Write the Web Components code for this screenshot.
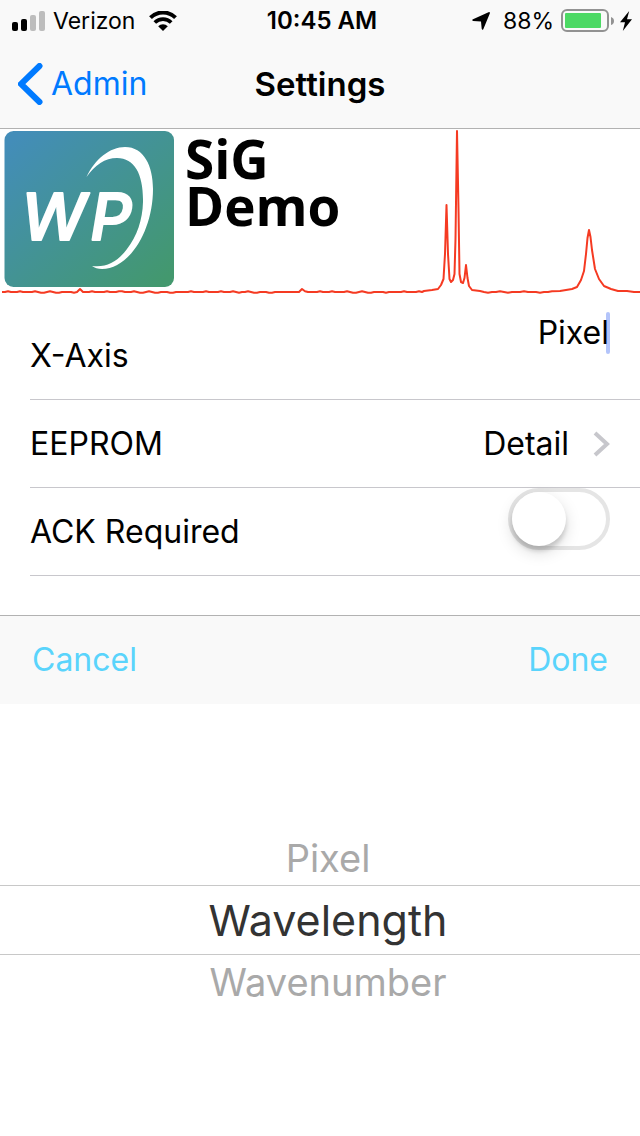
<!DOCTYPE html>
<html lang="en">
<head>
<meta charset="utf-8">
<meta name="viewport" content="width=device-width">
<title>Settings</title>
<style>
body { margin: 0; background: #fff; color: #000; font-family: Inter, "Liberation Sans", sans-serif; }
</style>
</head>
<body>
<settings-screen></settings-screen>
<script>
function define(name, html, setup) {
  const template = document.createElement('template');
  template.innerHTML = html;
  customElements.define(name, class extends HTMLElement {
    constructor() {
      super();
      this.attachShadow({ mode: 'open' }).append(template.content.cloneNode(true));
    }
    connectedCallback() { if (setup) setup(this, this.shadowRoot); }
  });
}

define('status-bar', `
<style>
:host { display: grid; grid-template-columns: 1fr auto 1fr; align-items: center; height: 40px; padding: 0 8px 0 12px; background: #f9f9f9; font-size: 23px; line-height: 42px; }
div { display: flex; align-items: center; }
.right { justify-content: flex-end; }
time { font-size: 24px; font-weight: 600; }
svg { display: block; flex: none; }
.bars { margin-right: 8px; }
.wifi { margin-left: 14px; }
.loc { margin-right: 13px; }
.battery { margin: 0 5px 0 7px; }
</style>
<div><svg class="bars" width="33" height="20" viewBox="0 0 33 20"><rect y="11" width="6" height="9" rx="2"/><rect x="9" y="8" width="6" height="12" rx="2"/><g fill="#bdbdbd"><rect x="18" y="4" width="6" height="16" rx="2"/><rect x="27" width="6" height="20" rx="2"/></g></svg>
<span>Verizon</span>
<svg class="wifi" width="28" height="20" viewBox="0 0 28 20"><path d="M1.500 6.600a17.800 17.800 0 0 1 25 0" fill="none" stroke="#000" stroke-width="4"/><path d="M5.800 11.500a11.600 11.600 0 0 1 16.400 0" fill="none" stroke="#000" stroke-width="3.700"/><path d="M9.200 15.300a6.800 6.800 0 0 1 9.600 0L14 20z"/></svg></div>
<time>10:45 AM</time>
<div class="right"><svg class="loc" width="18" height="18" viewBox="0 0 18 18"><path d="M16.500 .2q1.800-.4 1.300 1.300L11.400 17q-1 1.800-1.700-.2L9 9.600 1.200 8.900Q-.8 8.200 1 7.200z"/></svg>
<span>88%</span>
<svg class="battery" width="54" height="24" viewBox="0 0 54 24"><rect x="1" y="1" width="46" height="21" rx="5" fill="none" stroke="#929292" stroke-width="2"/><rect x="4" y="4" width="36" height="15" rx="1" fill="#4cd964"/><path d="M50 8q3 1 3 4t-3 4z" fill="#929292"/></svg>
<svg width="12" height="20" viewBox="0 0 12 20"><path d="M9.200 0 0 11.200h5L2.800 20 12 8.200H7z"/></svg></div>`);

define('nav-bar', `
<style>
:host { display: grid; grid-template-columns: 1fr auto 1fr; align-items: center; height: 88px; padding: 0 18px; background: #f9f9f9; border-bottom: 1px solid #b2b2b2; line-height: 40px; }
a { display: flex; align-items: center; gap: 8px; color: #007aff; font-size: 32px; text-decoration: none; }
h1 { margin: 0; font-size: 33px; font-weight: 600; }
</style>
<a href="#admin"><svg width="25" height="42" viewBox="0 0 25 42"><path d="M21.500 3 3 21l18.500 18" fill="none" stroke="#007aff" stroke-width="6" stroke-linecap="round"/></svg><slot name="back"></slot></a>
<h1><slot></slot></h1>`);

define('spectrum-banner', `
<style>
:host { display: grid; height: 183px; }
.chart, .brand { grid-area: 1 / 1; }
.chart { width: 100%; height: 166px; }
.brand { display: flex; gap: 10px; padding: 2px 4px; align-items: flex-start; }
p { margin: 0; padding-top: 4px; font: 700 53px/47px "Open Sans", "Noto Sans", sans-serif; }
</style>
<svg class="chart" viewBox="0 0 640 166" preserveAspectRatio="none" aria-hidden="true"><path id="trace" fill="none" stroke="#f53a22" stroke-width="2" stroke-linejoin="round"/></svg>
<div class="brand">
<svg width="171" height="157" viewBox="0 0 171 157"><defs><linearGradient id="g" x1="0" y1="0" x2="1" y2="1"><stop offset=".05" stop-color="#438db9"/><stop offset=".5" stop-color="#439393"/><stop offset=".95" stop-color="#43986e"/></linearGradient></defs>
<rect x=".5" width="169.500" height="156" rx="9" fill="url(#g)"/>
<path fill="#fff" d="M82.500 46C91 28 106 16 121 16c19 0 28 19 28 42 0 42-24 80-51 80q-6 0-10-3c15 2 26-5 35-17 10-13 15.500-29 16-47C139.500 44 131 27 113 27c-12 0-22 7-30.500 19z"/>
<text x="17" y="109" fill="#fff" stroke="#fff" stroke-width="2" stroke-linejoin="round" font-family="Inter, sans-serif" font-size="65" font-weight="500" font-style="italic">W<tspan dx="4">P</tspan></text></svg>
<p>SiG<br>Demo</p>
</div>`, (host, root) => {
  // Baseline with slight ripple, then the four measured emission peaks.
  const ripple = [0, 1, 0, 0, -1, 0, 1, 0, 0, 0, -1, 0, 0];
  const points = [];
  for (let i = 0, x = 2; x < 424; x += 3, i++) {
    const bump = Math.abs(x - 80) < 2 || Math.abs(x - 303) < 2 ? -3 : 0;
    points.push([x, 163 + ripple[(i * 5 + (i >> 3)) % 13] * .7 + bump]);
  }
  points.push([424,162],[432,161],[438,160],[441,156],[443.5,150],[445,125],[446.5,76],[448,125],[449.5,150],[451,153],[453,151],[454.5,145],[455.5,110],[457,2],[458.5,80],[459.5,145],[461,153],[463,154],[464.5,149],[466,136],[467.5,149],[469,157],[472,161],[480,162]);
  for (let i = 0, x = 484; x < 555; x += 4, i++) points.push([x, 163 + ripple[i % 13] * .7]);
  points.push([560,162],[566,161],[572,160],[577,158],[581,151],[584,142],[586,125],[587.5,109],[589,101],[590.5,108],[592,121],[595,140],[599,150],[604,157],[611,160],[618,162],[627,162],[634,163],[640,163]);
  root.getElementById('trace').setAttribute('d', 'M' + points.map(p => p.join(' ')).join('L'));
});

define('settings-row', `
<style>
:host { display: block; margin-left: 30px; border-bottom: 1px solid #c8c7cc; }
div { display: flex; height: 87px; padding-right: 30px; font-size: 32px; line-height: 42px; }
</style>
<div><slot></slot></div>`);

define('axis-field', `
<style>
:host { display: flex; justify-content: space-between; flex: 1; min-width: 0; }
label { align-self: center; }
span { position: relative; height: 42px; }
input { box-sizing: border-box; width: 240px; height: 42px; margin: 0; padding: 0 1px 0 0; border: 0; outline: 0; background: none; color: inherit; font: inherit; text-align: right; }
i { position: absolute; right: 0; top: 0; width: 4px; height: 42px; border-radius: 2px; background: rgba(65, 107, 242, .4); }
</style>
<label for="axis">X-Axis</label><span><input id="axis" type="text" value="Pixel"><i></i></span>`);

define('detail-link', `
<style>
:host { display: flex; flex: 1; }
a { display: flex; flex: 1; align-items: center; color: inherit; text-decoration: none; }
b { flex: 1; font-weight: 400; }
svg { margin-left: 24px; }
</style>
<a href="#eeprom"><b>EEPROM</b><span>Detail</span><svg width="17" height="26" viewBox="0 0 17 26"><path d="m2 2 12 11L2 24" fill="none" stroke="#c7c7cc" stroke-width="4"/></svg></a>`);

define('ack-switch', `
<style>
:host { display: flex; flex: 1; justify-content: space-between; }
label { align-self: center; }
input { appearance: none; box-sizing: border-box; width: 102px; height: 62px; margin: 0; border: 4px solid #e5e5e5; border-radius: 31px; background: #fff; }
input::before { content: ""; display: block; width: 54px; height: 54px; border-radius: 50%; background: #fff; box-shadow: 0 6px 16px rgba(0,0,0,.15), 0 5px 4px rgba(0,0,0,.14); }
input:checked { background: #4cd964; border-color: #4cd964; }
input:checked::before { margin-left: 40px; }
</style>
<label for="ack">ACK Required</label><input id="ack" type="checkbox" role="switch">`);

define('picker-toolbar', `
<style>
:host { display: flex; justify-content: space-between; align-items: center; height: 88px; padding: 0 32px; background: #f9f9f9; border-top: 1px solid #b2b2b2; }
button { margin: 0; padding: 0; border: 0; background: none; color: #5ad4fc; font: inherit; font-size: 32px; line-height: 42px; }
</style>
<button type="button">Cancel</button><button type="button">Done</button>`);

define('wheel-picker', `
<style>
:host { display: block; padding: 127px 0; }
fieldset { margin: 0; padding: 0; border: 0; }
label { display: flex; justify-content: center; align-items: center; height: 54px; padding-left: 16px; color: #a9a9a9; font-size: 38px; }
label:has(:checked) { height: 68px; border: solid #c8c8c8; border-width: 1px 0; color: #333; font-size: 43px; }
input { appearance: none; width: 0; height: 0; margin: 0; outline: 0; }
</style>
<fieldset aria-label="X-Axis">
<label><input type="radio" name="unit">Pixel</label>
<label><input type="radio" name="unit" checked>Wavelength</label>
<label><input type="radio" name="unit">Wavenumber</label>
</fieldset>`);

define('settings-screen', `
<style>
:host { display: block; }
picker-toolbar { margin-top: 39px; }
</style>
<status-bar></status-bar>
<nav-bar><span slot="back">Admin</span>Settings</nav-bar>
<main>
<spectrum-banner></spectrum-banner>
<settings-row><axis-field></axis-field></settings-row>
<settings-row><detail-link></detail-link></settings-row>
<settings-row><ack-switch></ack-switch></settings-row>
</main>
<picker-toolbar></picker-toolbar>
<wheel-picker></wheel-picker>`);
</script>
</body>
</html>
